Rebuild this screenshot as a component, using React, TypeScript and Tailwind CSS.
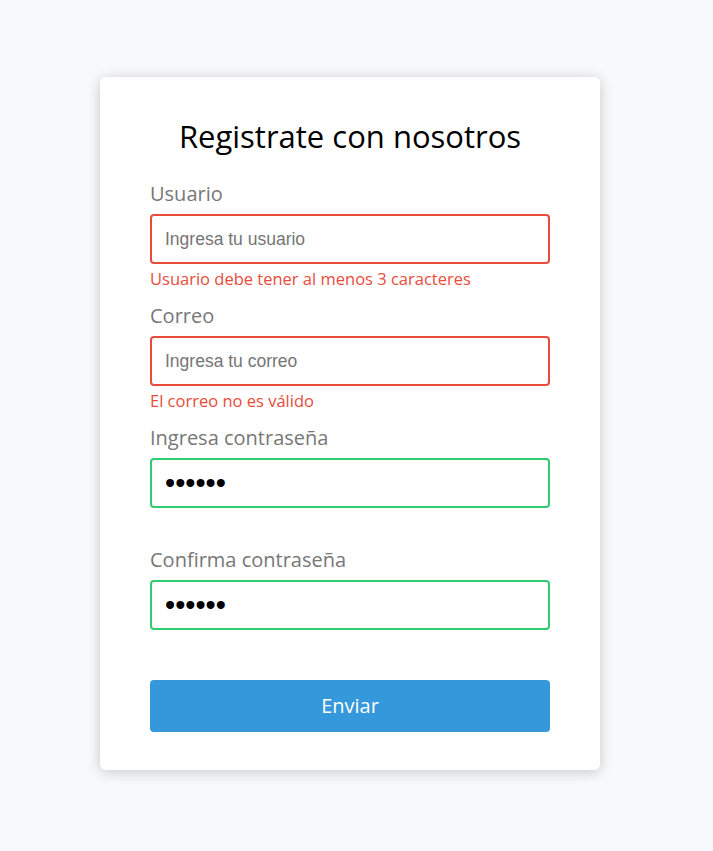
import React from 'react';

interface Field {
  label: string;
  type: string;
  placeholder: string;
  value: string;
  valid: boolean;
  error: string;
}

const fields: Field[] = [
  { label: 'Usuario', type: 'text', placeholder: 'Ingresa tu usuario', value: '', valid: false, error: 'Usuario debe tener al menos 3 caracteres' },
  { label: 'Correo', type: 'email', placeholder: 'Ingresa tu correo', value: '', valid: false, error: 'El correo no es válido' },
  { label: 'Ingresa contraseña', type: 'password', placeholder: '', value: '123456', valid: true, error: '' },
  { label: 'Confirma contraseña', type: 'password', placeholder: '', value: '123456', valid: true, error: '' },
];

const FormField: React.FC<{ field: Field }> = ({ field }) => (
  <div className="flex flex-col">
    <label className="text-[20px] leading-[28px] text-[#777] mb-[6px]">{field.label}</label>
    <input
      type={field.type}
      placeholder={field.placeholder}
      defaultValue={field.value}
      readOnly
      className={`h-[50px] w-full rounded-[4px] border-2 bg-white px-[13px] text-black outline-none placeholder:text-[#757575] font-['Liberation_Sans',sans-serif] ${
        field.type === 'password' ? 'text-[29px]' : 'text-[17.5px]'
      } ${field.valid ? 'border-[#2ecc71]' : 'border-[#e74c3c]'}`}
    />
    <p className="h-[24px] mt-[3px] mb-[1px] text-[16.5px] leading-[24px] text-[#e74c3c]">
      {field.error}
    </p>
  </div>
);

export default function App() {
  return (
    <div className="min-h-screen bg-[#f8f9fb] font-['Open_Sans',sans-serif] pt-[77px]">
      <div className="ml-[100px] w-[500px] rounded-[6px] bg-white px-[50px] pt-[38px] pb-[38px] shadow-[0_2px_14px_rgba(0,0,0,0.2)]">
        <h1 className="text-center text-[31px] leading-[42px] text-black mb-[23px]">
          Registrate con nosotros
        </h1>
        <form className="flex flex-col gap-[10px]">
          {fields.map((f) => (
            <FormField key={f.label} field={f} />
          ))}
          <button
            type="button"
            className="mt-[12px] h-[52px] w-full rounded-[4px] bg-[#3498db] text-[20px] text-white"
          >
            Enviar
          </button>
        </form>
      </div>
    </div>
  );
}
